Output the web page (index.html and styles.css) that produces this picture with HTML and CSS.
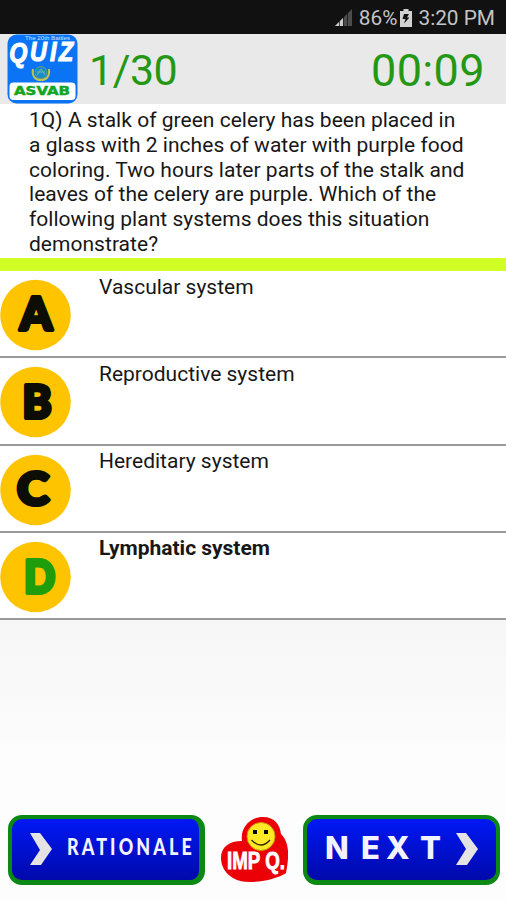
FILE: index.html
```html
<!DOCTYPE html>
<html lang="en">
<head>
    <meta charset="UTF-8">
    <title>ASVAB Quiz</title>
    <link rel="stylesheet" href="styles.css">
</head>
<body>
    <div class="status-bar">
        <svg class="signal" width="17" height="17" viewBox="0 0 17 17">
            <path d="M0 17L17 0V17Z" fill="#4c4c4c"/>
            <path d="M0 17L8 9V17Z" fill="#ccc"/>
            <path d="M4.500 10V17M8.500 6V17M12.500 2V17" stroke="#111" stroke-width="0.7"/>
        </svg>
        <span class="battery-level">86%</span>
        <svg class="battery" width="12" height="18" viewBox="0 0 12 18">
            <path d="M3.5 0H8.500V2H12V18H0V2H3.500Z" fill="#d2d2d2"/>
            <path d="M4 5H9L7 8.500H9.500L4 14.500L5.500 10H2.500Z" fill="#111"/>
        </svg>
        <span class="clock">3:20 PM</span>
    </div>

    <header class="header">
        <svg class="logo" width="72" height="70" viewBox="0 0 72 70">
            <rect x="1.500" y="0.500" width="70" height="69" rx="9" fill="#0b74f5"/>
            <text class="logo-top" x="19" y="5.500" textLength="45" lengthAdjust="spacingAndGlyphs">The 20th Battles</text>
            <text class="logo-quiz" transform="scale(0.83 1)" x="4 29 53 64" y="28 27 27 27">QUIZ</text>
            <circle cx="35" cy="38.500" r="6" fill="#168cce" stroke="#6c9a72" stroke-width="1"/>
            <path d="M27 35C25.500 43 30 46 35 46S44 43 43 35" fill="none" stroke="#bdc64c" stroke-width="2"/>
            <path d="M31 41L35 35L39 41M31 38H39" fill="none" stroke="#76b3a0" stroke-width="1"/>
            <rect x="3.500" y="48.500" width="66" height="17.500" rx="4" fill="#fff"/>
            <text class="logo-name" x="8" y="60.500" textLength="56" lengthAdjust="spacingAndGlyphs">ASVAB</text>
        </svg>
        <span class="counter">1/30</span>
        <span class="timer">00:09</span>
    </header>

    <p class="question">
        1Q) A stalk of green celery has been placed in<br>
        a glass with 2 inches of water with purple food<br>
        coloring. Two hours later parts of the stalk and<br>
        leaves of the celery are purple. Which of the<br>
        following plant systems does this situation<br>
        demonstrate?
    </p>

    <ul class="answers">
        <li class="answer">
            <svg class="badge" width="72" height="72" viewBox="0 0 72 72">
                <circle cx="35.500" cy="36" r="35.300"/>
                <text x="20" y="50.700" textLength="32" lengthAdjust="spacingAndGlyphs">A</text>
            </svg>
            <span>Vascular system</span>
        </li>
        <li class="answer">
            <svg class="badge" width="72" height="72" viewBox="0 0 72 72">
                <circle cx="35.500" cy="36" r="35.300"/>
                <text x="22.500" y="51.700" textLength="29" lengthAdjust="spacingAndGlyphs">B</text>
            </svg>
            <span>Reproductive system</span>
        </li>
        <li class="answer">
            <svg class="badge" width="72" height="72" viewBox="0 0 72 72">
                <circle cx="35.500" cy="36" r="35.300"/>
                <text x="17" y="51" textLength="32" lengthAdjust="spacingAndGlyphs">C</text>
            </svg>
            <span>Hereditary system</span>
        </li>
        <li class="answer selected">
            <svg class="badge" width="72" height="72" viewBox="0 0 72 72">
                <circle cx="35.500" cy="36" r="35.300"/>
                <text x="24" y="51.700" textLength="31" lengthAdjust="spacingAndGlyphs">D</text>
            </svg>
            <span>Lymphatic system</span>
        </li>
    </ul>

    <footer class="actions">
        <button class="btn rationale">
            <svg width="22" height="32" viewBox="0 0 22 32"><path d="M0 0H10L22 16L11 32H0L10 17Z" fill="#e4e2e2"/></svg>
            <svg width="126" height="32" viewBox="0 0 126 32"><text transform="scale(0.78 1)" x="0" y="22.500" textLength="160" lengthAdjust="spacing">RATIONALE</text></svg>
        </button>
        <svg class="important" width="68" height="68" viewBox="0 0 68 68">
            <path d="M22 25C20 12 30 1 43 1C55 1 60 9 61 18C70 27 69 41 66 57C58 62 45 66 29 66C11 66 1 54 1 42C1 31 9 25 22 25Z" fill="#eb0008"/>
            <circle cx="41" cy="20.500" r="14" fill="#ffe927" stroke="#c69c00" stroke-width="1"/>
            <rect x="33" y="14" width="4" height="4"/>
            <rect x="44" y="14" width="4" height="4"/>
            <path d="M31.500 24Q41 34 50 24" fill="none" stroke="#302600" stroke-width="1.300"/>
            <text x="7" y="52.500" textLength="58" lengthAdjust="spacingAndGlyphs">IMP Q.</text>
        </svg>
        <button class="btn next">
            <svg width="120" height="40" viewBox="0 0 120 40"><text x="0 36 61 95" y="30">NEXT</text></svg>
            <svg width="22" height="32" viewBox="0 0 22 32"><path d="M0 0H10L22 16L11 32H0L10 16Z" fill="#e4e2e2"/></svg>
        </button>
    </footer>
</body>
</html>
```

FILE: styles.css
```css
* {
    box-sizing: border-box;
}

body {
    margin: 0;
    height: 900px;
    display: flex;
    flex-direction: column;
    overflow: hidden;
    font-family: Roboto, sans-serif;
    color: #171717;
    background: linear-gradient(#f7f7f7 620px, #fbfbfb 735px, #fdfdfd 745px);
}

.status-bar {
    height: 34px;
    flex: none;
    display: flex;
    align-items: center;
    justify-content: flex-end;
    padding: 1px 11px 0 0;
    background: #111;
    color: #c4c4c4;
    font-size: 20.8px;
}

.battery-level {
    margin-left: 7px;
}

.battery {
    margin: 0 6px 0 3px;
}

.header {
    height: 70px;
    flex: none;
    display: flex;
    align-items: center;
    padding: 0 21px 0 6px;
    background: #e9e9e9;
    color: #249815;
    font-size: 45px;
}

.logo-top {
    font: 6px "Liberation Sans", sans-serif;
    fill: #c5e2ff;
}

.logo-quiz {
    font: italic bold 28px "Liberation Sans", sans-serif;
    fill: #fff;
    stroke: #fff;
    stroke-width: 1.2;
}

.logo-name {
    font: bold 12px "DejaVu Sans", sans-serif;
    fill: #12a51d;
    stroke: #12a51d;
    stroke-width: 0.5;
}

.counter {
    margin: 1px 0 0 11px;
    font-size: 43px;
    letter-spacing: -0.5px;
}

.timer {
    margin: 3px 0 0 auto;
    letter-spacing: 0.4px;
}

.question {
    height: 167px;
    flex: none;
    margin: 0;
    padding: 4px 0 0 29px;
    background: #fff;
    border-bottom: 13px solid #d1ff25;
    font-size: 21px;
    line-height: 24.8px;
    white-space: nowrap;
    letter-spacing: 0.03px;
}

.answers {
    list-style: none;
    margin: 0;
    padding: 0;
    background: #fff;
}

.answer {
    height: 87.3px;
    display: flex;
    gap: 27px;
    border-bottom: 2px solid #999;
    font-size: 21px;
    line-height: 25px;
}

.answer span {
    padding-top: 3.5px;
}

.badge {
    margin-top: 8px;
}

.badge circle {
    fill: #ffc400;
}

.badge text {
    font: 900 46px Lato, sans-serif;
    fill: #0c0d04;
    stroke: #0c0d04;
    stroke-width: 4;
    stroke-linejoin: round;
}

.selected span {
    font-weight: bold;
    letter-spacing: -0.02px;
}

.selected .badge text {
    fill: #209d0b;
    stroke: #209d0b;
}

.actions {
    display: flex;
    align-items: center;
    margin: auto 6px 15px 8px;
}

.btn {
    height: 70px;
    width: 197px;
    display: flex;
    align-items: center;
    padding: 0;
    border: 4px solid #0b8914;
    border-bottom-width: 5px;
    border-radius: 14px;
    background: linear-gradient(#0018f5, #0009aa);
}

.btn text {
    font: 900 23px Lato, sans-serif;
    fill: #f3f3ff;
}

.btn svg {
    margin-top: -2px;
}

.rationale {
    border-right-width: 6px;
    gap: 15px;
    padding-left: 18px;
}

.important {
    margin: 0 15px;
}

.important text {
    font: bold 23px "Liberation Sans", sans-serif;
    fill: #fff;
    stroke: #fff;
    stroke-width: 0.8;
}

.next {
    gap: 11px;
    padding-left: 18px;
}

.next text {
    font: 800 31px Inter, sans-serif;
}
```
